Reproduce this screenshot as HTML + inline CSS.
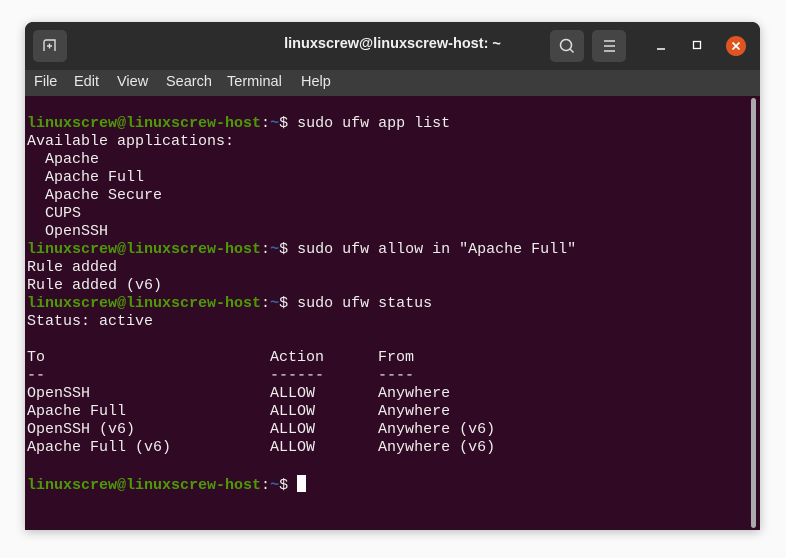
<!DOCTYPE html>
<html><head><style>
body{margin:0;width:786px;height:558px;background:#fafafa;position:relative;overflow:hidden;font-family:"Liberation Sans",sans-serif}
.win{position:absolute;left:25px;top:22px;width:735px;height:508px;border-radius:8px 8px 0 0;overflow:hidden;box-shadow:0 2px 10px rgba(0,0,0,.25);background:#300a24}
.title{position:absolute;left:0;top:0;width:735px;height:48px;background:#2c2c2c}
.menu{position:absolute;left:0;top:48px;width:735px;height:26px;background:#3c3c3c;color:#e8e8e8;font-size:14.5px}
.menu span{position:absolute;top:4px}
.btn{position:absolute;top:8px;width:34px;height:32px;border-radius:5px;background:#454545}
.tt{position:absolute;left:0;width:735px;top:14px;text-align:center;color:#f0f0f0;font-weight:bold;font-size:14.5px}
pre{position:absolute;left:2px;top:75px;margin:0;font-family:"Liberation Mono",monospace;font-size:15px;line-height:18px;color:#eeeeec}
.g{color:#4e9a06;font-weight:bold}.b{color:#3465a4;font-weight:bold}
.cur{display:inline-block;width:9px;height:17px;background:#fff;vertical-align:-3px}
.sb{position:absolute;left:726px;top:76px;width:5px;height:430px;border-radius:3px;background:#aaa}
</style></head><body>
<div class="win">
<div class="title">
<div class="btn" style="left:8px"><svg width="34" height="32"><path d="M11 21V12a2 2 0 0 1 2-2h9v11M14 16h5M16.5 13.5v5" stroke="#ddd" stroke-width="1.4" fill="none"/></svg></div>
<div class="tt">linuxscrew@linuxscrew-host: ~</div>
<div class="btn" style="left:525px"><svg width="34" height="32"><circle cx="16" cy="15" r="5.5" stroke="#ddd" stroke-width="1.5" fill="none"/><path d="M20 19l3.5 3.5" stroke="#ddd" stroke-width="1.5"/></svg></div>
<div class="btn" style="left:567px"><svg width="34" height="32"><path d="M12 11h11M12 16h11M12 21h11" stroke="#ddd" stroke-width="1.4"/></svg></div>
<svg style="position:absolute;left:627px;top:14px" width="20" height="20"><path d="M5 13h8" stroke="#fff" stroke-width="1.5"/></svg>
<svg style="position:absolute;left:665px;top:14px" width="20" height="20"><rect x="3.5" y="5.5" width="7" height="7" stroke="#fff" stroke-width="1.3" fill="none"/></svg>
<svg style="position:absolute;left:701px;top:14px" width="20" height="20"><circle cx="10" cy="10" r="10" fill="#e05420"/><path d="M6.5 6.5l7 7M13.5 6.5l-7 7" stroke="#fff" stroke-width="1.8"/></svg>
</div>
<div class="menu"><span style="left:9px">File</span><span style="left:49px">Edit</span><span style="left:92px">View</span><span style="left:141px">Search</span><span style="left:202px">Terminal</span><span style="left:276px">Help</span></div>
<pre>

<span class="g">linuxscrew@linuxscrew-host</span>:<span class="b">~</span>$ sudo ufw app list
Available applications:
  Apache
  Apache Full
  Apache Secure
  CUPS
  OpenSSH
<span class="g">linuxscrew@linuxscrew-host</span>:<span class="b">~</span>$ sudo ufw allow in "Apache Full"
Rule added
Rule added (v6)
<span class="g">linuxscrew@linuxscrew-host</span>:<span class="b">~</span>$ sudo ufw status
Status: active

To                         Action      From
--                         ------      ----
OpenSSH                    ALLOW       Anywhere
Apache Full                ALLOW       Anywhere
OpenSSH (v6)               ALLOW       Anywhere (v6)
Apache Full (v6)           ALLOW       Anywhere (v6)

<span class="g">linuxscrew@linuxscrew-host</span>:<span class="b">~</span>$ <span class="cur"></span></pre>
<div class="sb"></div>
</div>
</body></html>
